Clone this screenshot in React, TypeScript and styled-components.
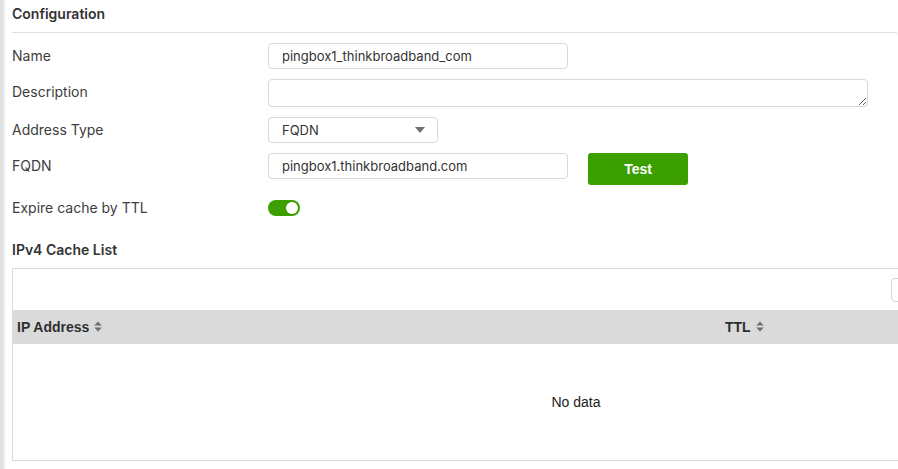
import React from "react";
import styled, { createGlobalStyle } from "styled-components";

const Global = createGlobalStyle`
  html, body { margin: 0; padding: 0; background: #fff; overflow: hidden; }
  body { font-family: Inter, "Noto Sans", sans-serif; color: #3a3a3a; }
  * { box-sizing: border-box; }
`;

const Shell = styled.div`
  display: flex;
  width: 898px;
  height: 469px;
  overflow: hidden;
`;

const SideShade = styled.div`
  flex: 0 0 6px;
  background: linear-gradient(to right, #e9e9e9 0%, #dadada 30%, #ececec 65%, #ffffff 100%);
`;

const Main = styled.div`
  flex: 1;
  padding: 0 1px 0 6px;
  min-width: 0;
`;

const SectionTitle = styled.div<{ $line?: boolean }>`
  font-size: 14px;
  font-weight: 600;
  color: #333;
  line-height: 16px;
  padding: ${(p) => (p.$line ? "6px 0 10px" : "0")};
  border-bottom: ${(p) => (p.$line ? "1px solid #dedede" : "none")};
`;

const Form = styled.div`
  display: flex;
  flex-direction: column;
  gap: 10px;
  padding-top: 10px;
`;

const Row = styled.div`
  display: flex;
  align-items: flex-start;
`;

const Label = styled.div`
  flex: 0 0 256px;
  font-size: 14px;
  line-height: 26px;
  color: #3d3d3d;
`;

const TextInput = styled.div<{ $w: number }>`
  width: ${(p) => p.$w}px;
  height: 26px;
  border: 1px solid #d9d9d9;
  border-radius: 4px;
  padding: 0 13px;
  font-size: 13px;
  line-height: 24px;
  color: #333;
  white-space: nowrap;
`;

const TextArea = styled.textarea`
  width: 600px;
  height: 28px;
  border: 1px solid #d9d9d9;
  border-radius: 4px;
  resize: vertical;
  padding: 4px 13px;
  font-family: Inter, sans-serif;
  font-size: 13px;
  outline: none;
  display: block;
`;

const Select = styled.div`
  width: 170px;
  height: 26px;
  border: 1px solid #d9d9d9;
  border-radius: 4px;
  padding: 0 12px 0 13px;
  font-size: 13px;
  line-height: 24px;
  color: #333;
  display: flex;
  align-items: center;
  justify-content: space-between;
`;

const Caret = styled.svg`
  width: 10px;
  height: 6px;
`;

const TestButton = styled.button`
  margin-left: 20px;
  width: 100px;
  height: 32px;
  border: none;
  border-radius: 3px;
  background: #3b9f00;
  color: #fff;
  font-family: "Liberation Sans", Arial, sans-serif;
  font-weight: 700;
  font-size: 14px;
  cursor: pointer;
`;

const ToggleWrap = styled.div`
  height: 26px;
  display: flex;
  align-items: center;
`;

const Toggle = styled.div<{ $on: boolean }>`
  width: 32px;
  height: 16px;
  border-radius: 8px;
  background: ${(p) => (p.$on ? "#3b9f00" : "#ccc")};
  display: flex;
  align-items: center;
  justify-content: ${(p) => (p.$on ? "flex-end" : "flex-start")};
  padding: 0 2px;
`;

const Knob = styled.div`
  width: 12px;
  height: 12px;
  border-radius: 50%;
  background: #fff;
`;

const CacheSection = styled.div`
  padding-top: 21px;
`;

const TableBox = styled.div`
  margin-top: 10px;
  width: 1128px;
  border: 1px solid #dcdcdc;
  font-family: "Liberation Sans", Arial, sans-serif;
`;

const Toolbar = styled.div`
  height: 41px;
  display: flex;
  align-items: center;
  justify-content: flex-end;
  padding: 0 8px;
`;

const Search = styled.div`
  width: 240px;
  height: 24px;
  border: 1px solid #d3d3d3;
  border-radius: 4px;
`;

const HeadRow = styled.div`
  display: grid;
  grid-template-columns: 708px 1fr;
  height: 34px;
  background: #dadada;
  align-items: center;
`;

const HeadCell = styled.div`
  padding-left: 4px;
  font-size: 14px;
  font-weight: 700;
  color: #2e2e2e;
  display: flex;
  align-items: center;
  gap: 5px;
`;

const SortIcon = styled.svg`
  width: 8px;
  height: 11px;
  margin-top: -2px;
`;

const Empty = styled.div`
  height: 116px;
  display: flex;
  align-items: center;
  justify-content: center;
  font-size: 14px;
  color: #222;
`;

const Sort = () => (
  <SortIcon viewBox="0 0 8 11">
    <path d="M4 0.5 L7.8 4.6 H0.2 Z" fill="#6f6f6f" />
    <path d="M4 10.5 L7.8 6.4 H0.2 Z" fill="#6f6f6f" />
  </SortIcon>
);

export default function App() {
  return (
    <>
      <Global />
      <Shell>
        <SideShade />
        <Main>
          <SectionTitle $line>Configuration</SectionTitle>
          <Form>
            <Row>
              <Label>Name</Label>
              <TextInput $w={300}>pingbox1_thinkbroadband_com</TextInput>
            </Row>
            <Row>
              <Label>Description</Label>
              <TextArea />
            </Row>
            <Row>
              <Label>Address Type</Label>
              <Select>
                FQDN
                <Caret viewBox="0 0 10 6">
                  <path d="M0 0 H10 L5 6 Z" fill="#707070" />
                </Caret>
              </Select>
            </Row>
            <Row>
              <Label>FQDN</Label>
              <TextInput $w={300}>pingbox1.thinkbroadband.com</TextInput>
              <TestButton>Test</TestButton>
            </Row>
            <Row>
              <Label>Expire cache by TTL</Label>
              <ToggleWrap>
                <Toggle $on>
                  <Knob />
                </Toggle>
              </ToggleWrap>
            </Row>
          </Form>
          <CacheSection>
            <SectionTitle>IPv4 Cache List</SectionTitle>
            <TableBox>
              <Toolbar>
                <Search />
              </Toolbar>
              <HeadRow>
                <HeadCell>
                  IP Address <Sort />
                </HeadCell>
                <HeadCell>
                  TTL <Sort />
                </HeadCell>
              </HeadRow>
              <Empty>No data</Empty>
            </TableBox>
          </CacheSection>
        </Main>
      </Shell>
    </>
  );
}
